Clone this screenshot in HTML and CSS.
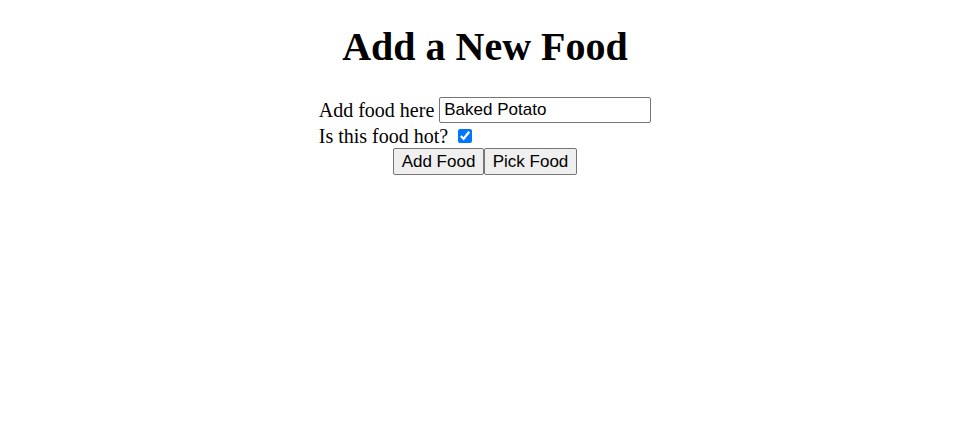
FILE: index.html
```html
<!DOCTYPE html>
<html lang="en">
<head>
<meta charset="utf-8">
<title>Add a New Food</title>
<link rel="stylesheet" href="styles.css">
</head>
<body>
<h1 class="title">Add a New Food</h1>
<form class="food-form">
  <div class="fields">
    <div class="row row-text">
      <label class="label" for="food">Add food here</label>
      <input class="text-input" id="food" type="text" value="Baked Potato">
    </div>
    <div class="row row-check">
      <label class="label" for="hot">Is this food hot?</label>
      <input class="check" id="hot" type="checkbox" checked>
    </div>
  </div>
  <div class="buttons">
    <button class="btn btn-add" type="button">Add Food</button><button class="btn btn-pick" type="button">Pick Food</button>
  </div>
</form>
</body>
</html>
```
FILE: styles.css
```css
html, body {
  background: #ffffff;
}
body {
  margin: 8px 13px 8px 8px;
  font-family: "Liberation Serif", "Times New Roman", serif;
  font-size: 20px;
  color: #000000;
}
.title {
  margin: 16px 0 0 0;
  text-align: center;
  font-size: 40px;
  font-weight: bold;
  line-height: 46px;
}
.food-form {
  margin-top: 26px;
  display: flex;
  flex-direction: column;
  align-items: center;
}
.fields {
  display: flex;
  flex-direction: column;
  align-items: flex-start;
}
.row {
  display: flex;
  align-items: center;
}
.row-text {
  height: 28px;
}
.row-check {
  height: 24px;
}
.label {
  line-height: 23px;
}
.text-input {
  box-sizing: border-box;
  width: 212px;
  height: 26px;
  margin: 0 0 0 5px;
  padding: 1px 4px;
  border: 1px solid #767676;
  border-radius: 2px;
  font-family: "Liberation Sans", Arial, sans-serif;
  font-size: 17px;
  color: #000;
}
.check {
  width: 14px;
  height: 14px;
  margin: 0 0 0 10px;
  accent-color: #0075ff;
}
.buttons {
  display: flex;
}
.btn {
  box-sizing: border-box;
  height: 27px;
  margin: 0;
  padding: 0 2px;
  border: 1px solid #767676;
  border-radius: 2px;
  background: #efefef;
  font-family: "Liberation Sans", Arial, sans-serif;
  font-size: 17px;
  white-space: nowrap;
  color: #000;
}
.btn-add {
  width: 91px;
}
.btn-pick {
  width: 93px;
}
```
